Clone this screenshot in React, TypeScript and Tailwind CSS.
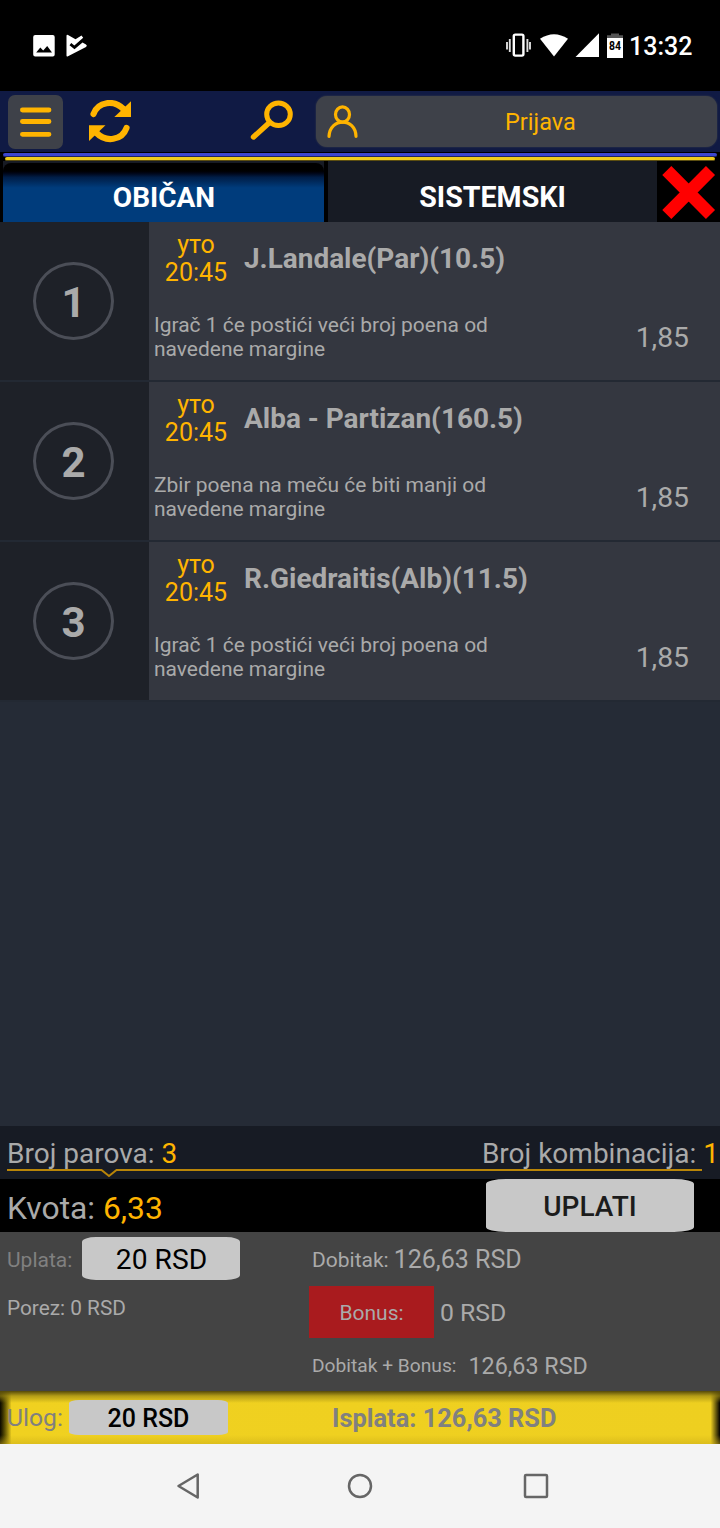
import React from "react";

const bets = [
  { n: 1, title: "J.Landale(Par)(10.5)", text: ["Igrač 1 će postići veći broj poena od", "navedene margine"], odds: "1,85" },
  { n: 2, title: "Alba - Partizan(160.5)", text: ["Zbir poena na meču će biti manji od", "navedene margine"], odds: "1,85" },
  { n: 3, title: "R.Giedraitis(Alb)(11.5)", text: ["Igrač 1 će postići veći broj poena od", "navedene margine"], odds: "1,85" },
];

function StatusBar() {
  return (
    <div className="flex h-[91px] items-start bg-black pt-[30px] text-white">
      <svg className="ml-[32px] h-8 w-14" viewBox="0 0 56 32">
        <path fill="#fff" fillRule="evenodd" d="M3.200 5H20.800Q22.700 5 22.700 7V24.500Q22.700 26.500 20.800 26.500H3.200Q1.200 26.500 1.200 24.500V7Q1.200 5 3.200 5ZM4.200 22.500H20L15.200 16L11.200 20.500L8.300 17.500Z" />
        <path fill="#fff" d="M36 5Q34.500 4.300 34.500 6V25.500Q34.500 27 36 26.200L54 17Q55.800 15.800 54 14.600L50.500 12.600L42.500 19.200L37.500 15.200L39.300 13L42.300 15.500L51.200 7.800L49.500 5.500L43.500 9.200Z" />
      </svg>
      <svg className="ml-[417px] h-8 w-[122px]" viewBox="0 0 122 32">
        <rect x="8.800" y="4.600" width="9.600" height="21" rx="1.500" fill="none" stroke="#fff" strokeWidth="2.400" />
        <path d="M4.800 9V22M2 12V19.500M22.400 9V22M25 12V19.500" stroke="#ddd" strokeWidth="1.900" />
        <path d="M35 8.800Q49 -.5 63 8.800L49 26.500Z" fill="#fff" />
        <path d="M70.500 27L94 3.300V27Z" fill="#fff" />
        <path d="M106 3.500H114V5.300H118V8H102V5.300H106Z" fill="#555" />
        <path d="M102 8H118V28H102Z" fill="#fff" />
        <text x="110" y="20" textAnchor="middle" fontFamily="Roboto" fontWeight="700" fontSize="13" textLength="12" lengthAdjust="spacingAndGlyphs" fill="#000">84</text>
      </svg>
      <span className="ml-[2px] pt-[1px] text-[25px] font-medium leading-8">13:32</span>
    </div>
  );
}

function Header() {
  return (
    <div className="flex h-[61px] items-start bg-[#101a44] pt-1">
      <button className="ml-2 flex h-[54px] w-[55px] items-center justify-center rounded-[7px] bg-[#3e4149]">
        <svg className="h-8 w-8" viewBox="0 0 32 32">
          <path d="M2.400 4H29M2.400 15.500H29M2.400 28.300H29" stroke="#ffb400" strokeWidth="4.800" strokeLinecap="round" />
        </svg>
      </button>
      <svg className="ml-[25px] mt-[5px] h-[44px] w-[44px]" viewBox="0 0 44 44">
        <path d="M5.500 14C10 1.500 26 -.8 36 9.500" fill="none" stroke="#ffb400" strokeWidth="6.200" strokeLinecap="round" />
        <path d="M43 1.200V17H26.300Z" fill="#ffb400" />
        <path d="M38.500 28C34 40.500 18 42.800 8 32.500" fill="none" stroke="#ffb400" strokeWidth="6.200" strokeLinecap="round" />
        <path d="M1 25.300H17.500L1 41Z" fill="#ffb400" />
      </svg>
      <svg className="ml-[116px] mt-[4px] h-[44px] w-[46px]" viewBox="0 0 46 44">
        <ellipse cx="30.500" cy="15.300" rx="11.800" ry="11.300" fill="none" stroke="#ffb400" strokeWidth="5" />
        <path d="M21.500 23.500L5.500 38" stroke="#ffb400" strokeWidth="5.400" strokeLinecap="round" />
      </svg>
      <button className="ml-[22px] mt-[1px] flex h-[51px] w-[401px] items-center rounded-[11px] bg-[#3e4149] shadow-[0_0_2px_#3e4149]">
        <svg className="ml-[10px] h-9 w-8" viewBox="0 0 32 36">
          <ellipse cx="16.500" cy="10.500" rx="7" ry="7.700" fill="none" stroke="#ffb400" strokeWidth="3.200" />
          <path d="M3 32.300C4 13.300 29.500 13.300 30 32.300" fill="none" stroke="#ffb400" strokeWidth="3.200" strokeLinecap="round" />
        </svg>
        <span className="ml-[147px] text-[23.5px] leading-7 text-[#ffb400]">Prijava</span>
      </button>
    </div>
  );
}

function Divider() {
  return (
    <div className="flex h-[9px] flex-col bg-black pt-[1px]">
      <div className="ml-[3px] mr-[3px] h-[4px] rounded-full border-b border-[#202560] bg-[#3c46d0]" />
      <div className="ml-[5px] mr-[5px] h-[4px] rounded-full border-b border-[#5c4e10] bg-[#f0cc1c]" />
    </div>
  );
}

function Tabs() {
  return (
    <div className="flex h-[61px] bg-black text-[28px] font-bold leading-8 text-white">
      <div className="flex w-[328px] pl-[3px] pr-[4px]">
        <div className="flex flex-1 bg-[#171b24] pt-[2px]">
          <button className="flex-1 rounded-t-[8px] bg-linear-to-b from-black from-10% via-[#001d46] via-24% to-[#003c7c] to-42% pl-[1px] pt-[10px]">OBIČAN</button>
        </div>
      </div>
      <button className="w-[329px] bg-[#171b24] pt-[10px] text-[28.600px]">SISTEMSKI</button>
      <svg className="h-[61px] w-[63px]" viewBox="0 0 63 61">
        <path d="M9.800 9.500L53.500 53.500M53.500 9.500L9.800 53.500" stroke="#f00" strokeWidth="12.800" />
      </svg>
    </div>
  );
}

function BetRow({ bet }: { bet: (typeof bets)[number] }) {
  return (
    <div className="flex h-[160px] border-b-2 border-[#232933] text-[#aaa]">
      <div className="flex w-[149px] items-center bg-[#1e2128] pl-[33px]">
        <div className="flex h-[78px] w-[81px] items-center justify-center rounded-[50%] border-[3px] border-[#4b4e57] pt-[4px] text-[42px] font-bold leading-none">{bet.n}</div>
      </div>
      <div className="flex flex-1 flex-col bg-[#343740] pt-[9px]">
        <div className="flex h-[56px]">
          <div className="ml-[15px] w-[64px] whitespace-nowrap text-center text-[25px] leading-[28px] text-[#ffb400]">
            <div>уто</div>
            <div>20:45</div>
          </div>
          <div className="ml-[16px] pt-[12px] text-[27.950px] font-bold leading-8">{bet.title}</div>
        </div>
        <div className="mt-[26px] flex justify-between">
          <div className="ml-[5px] text-[20.970px] leading-6">
            {bet.text.map((t) => <div key={t}>{t}</div>)}
          </div>
          <div className="mr-[31px] pt-[9px] text-[28.300px] leading-8">{bet.odds}</div>
        </div>
      </div>
    </div>
  );
}

function Summary() {
  return (
    <div className="text-[#aaa]">
      <div className="h-[53px] bg-[#171b24] pt-[12px]">
        <div className="flex h-[32px] justify-between pl-[7px] pr-[1px] text-[28px] leading-8">
          <div>Broj parova: <span className="text-[#ffb400]">3</span></div>
          <div>Broj kombinacija: <span className="text-[#ffb400]">1</span></div>
        </div>
        <svg className="-mt-[2px] h-[10px] w-full" viewBox="0 0 720 10">
          <path d="M7 2H101.500L109 8L116.500 2H702" fill="none" stroke="#b98508" strokeWidth="2" />
        </svg>
      </div>
      <div className="flex h-[53px] items-start justify-between bg-black">
        <div className="ml-[7px] pt-[11px] text-[31.800px] leading-9">Kvota: <span className="text-[#ffb400]">6,33</span></div>
        <button className="mr-[26px] h-[53px] w-[208px] rounded-[20px/5px] bg-[#c8c8c8] pt-[3px] text-[28px] font-medium leading-8 text-[#1c1c1c]">UPLATI</button>
      </div>
    </div>
  );
}

function Payout() {
  return (
    <div className="flex h-[159px] bg-[#444] text-[21px] leading-7 text-[#aaa]">
      <div className="w-[309px] pl-[7px] pt-[5px]">
        <div className="flex">
          <span className="w-[75px] pt-[9px] text-[#808080]">Uplata:</span>
          <button className="h-[43px] w-[158px] rounded-[14px/5px] bg-[#c8c8c8] pl-[1px] pt-[3px] text-[28.200px] leading-8 text-black">20 RSD</button>
        </div>
        <div className="pt-[14px] text-[20.800px]">Porez: 0 RSD</div>
      </div>
      <div>
        <div className="flex h-[54px] pl-[3px] pt-[14px]">
          <span>Dobitak:</span>
          <span className="ml-[5px] text-[25px]">126,63 RSD</span>
        </div>
        <div className="flex h-[52px]">
          <button className="w-[125px] bg-[#a91b1e] pt-[2px]">Bonus:</button>
          <span className="ml-[6px] pt-[13px] text-[24.800px]">0 RSD</span>
        </div>
        <div className="flex pl-[3px] pt-[14px]">
          <span className="text-[19.200px]">Dobitak + Bonus:</span>
          <span className="ml-[12px] text-[23.300px]">126,63 RSD</span>
        </div>
      </div>
    </div>
  );
}

function Total() {
  return (
    <div className="h-[53px] bg-linear-to-r from-[#0a0800] from-0% via-[#f0d120] via-[1.6%] to-[#eecf20]">
      <div className="h-[53px] bg-linear-to-l from-black from-0% to-transparent to-[1.3%]">
        <div className="flex h-[53px] bg-[linear-gradient(to_bottom,#554909_0px,#9a8612b0_5px,#eecf2000_12px,#eecf2000_44px,#c9ac1880_53px)] pl-[7px] pt-[9px] text-[25px] font-bold text-[#808080]">
          <span className="w-[62px] pt-[2px] text-[24.700px] font-normal leading-8">Ulog:</span>
          <button className="h-[35px] w-[159px] rounded-[10px/3px] bg-[#c8c8c8] pt-[3px] font-medium leading-8 text-black">20 RSD</button>
          <span className="ml-[104px] pt-[2px] text-[25.400px] leading-8">Isplata: 126,63 RSD</span>
        </div>
      </div>
    </div>
  );
}

function NavBar() {
  return (
    <div className="h-[84px] bg-[#f4f4f4]">
      <svg className="h-[84px] w-[720px]" viewBox="0 0 720 84" fill="none" stroke="#666" strokeWidth="2.500" strokeLinejoin="round">
        <path d="M197.700 30.500V53.500L178.500 42Z" />
        <circle cx="360" cy="42" r="11" />
        <rect x="525" y="31" width="22" height="22" rx="1" />
      </svg>
    </div>
  );
}

export default function App() {
  return (
    <div className="flex h-[1528px] w-[720px] flex-col overflow-hidden whitespace-nowrap bg-[#252b36] font-[Roboto,sans-serif]">
      <StatusBar />
      <Header />
      <Divider />
      <Tabs />
      <div className="flex-1">
        {bets.map((b) => <BetRow key={b.n} bet={b} />)}
      </div>
      <Summary />
      <Payout />
      <Total />
      <NavBar />
    </div>
  );
}
